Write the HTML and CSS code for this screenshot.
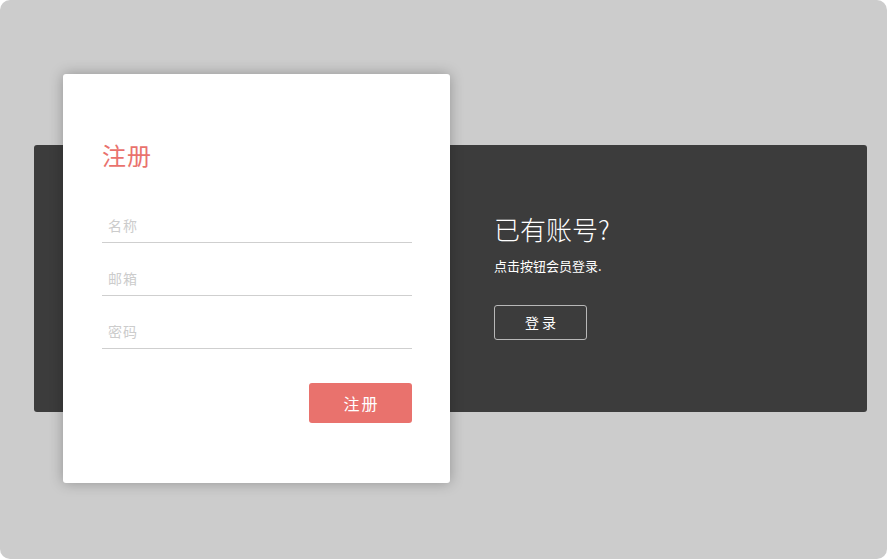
FILE: index.html
```html
<!DOCTYPE html>
<html lang="zh-CN">
<head>
<meta charset="utf-8">
<title>注册</title>
<link rel="stylesheet" href="styles.css">
</head>
<body>
<div class="page">
  <div class="panel">
    <div class="panel-info">
      <h2 class="info-title">已有账号?</h2>
      <p class="info-text">点击按钮会员登录.</p>
      <button class="btn-outline" type="button">登录</button>
    </div>
  </div>
  <form class="card">
    <h1 class="card-title">注册</h1>
    <input class="field" type="text" placeholder="名称">
    <input class="field" type="email" placeholder="邮箱">
    <input class="field" type="password" placeholder="密码">
    <div class="actions">
      <button class="btn-primary" type="button">注册</button>
    </div>
  </form>
</div>
</body>
</html>
```
FILE: styles.css
```css
* { box-sizing: border-box; }
html, body {
  margin: 0;
  padding: 0;
  background: #ffffff;
}
body {
  font-family: "Noto Sans CJK SC", "Noto Sans", sans-serif;
}
.page {
  position: relative;
  width: 887px;
  height: 559px;
  background: #cccccc;
  border-radius: 10px;
  padding-top: 145px;
  overflow: hidden;
}
.panel {
  margin-left: 34px;
  width: 833px;
  height: 267px;
  background: #3c3c3c;
  border-radius: 3px;
  padding: 71px 0 0 460px;
}
.panel-info {
  display: flex;
  flex-direction: column;
  align-items: flex-start;
}
.info-title {
  margin: 0;
  font-size: 26px;
  line-height: 26px;
  font-weight: 300;
  color: #ffffff;
}
.info-text {
  margin: 17px 0 0;
  font-size: 13px;
  line-height: 13px;
  color: #ffffff;
}
.btn-outline {
  margin-top: 33px;
  width: 93px;
  height: 35px;
  background: transparent;
  border: 1px solid #b8b8b8;
  border-radius: 3px;
  color: #ffffff;
  font-family: inherit;
  font-size: 14px;
  letter-spacing: 3px;
  text-indent: 3px;
  padding: 0 0 2px;
}
.card {
  position: absolute;
  left: 63px;
  top: 74px;
  width: 387px;
  height: 409px;
  margin: 0;
  background: #ffffff;
  border-radius: 3px;
  box-shadow: 0 0 14px rgba(0, 0, 0, 0.28);
  padding: 69px 38px 0 39px;
  display: flex;
  flex-direction: column;
}
.card-title {
  margin: 0 0 35px;
  font-size: 24px;
  line-height: 24px;
  font-weight: 400;
  letter-spacing: 1px;
  color: #e9726d;
}
.field {
  display: block;
  width: 310px;
  height: 41px;
  margin: 0 0 12px;
  padding: 16px 6px 10px;
  border: none;
  border-bottom: 1px solid #cfcfcf;
  outline: none;
  background: transparent;
  font-family: inherit;
  font-size: 14px;
  line-height: 14px;
  color: #333;
}
.field::placeholder {
  color: #cccccc;
  letter-spacing: 1px;
}
.actions {
  display: flex;
  justify-content: flex-end;
  margin-top: 22px;
}
.btn-primary {
  width: 103px;
  height: 40px;
  border: none;
  border-radius: 3px;
  background: #e9726d;
  color: #ffffff;
  font-family: inherit;
  font-size: 16px;
  letter-spacing: 2px;
  text-indent: 2px;
  padding: 0 0 1px;
}
```
